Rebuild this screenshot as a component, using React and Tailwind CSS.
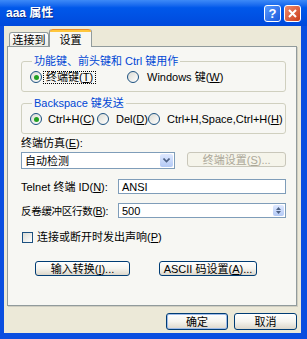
import React from "react";

const FONT = "font-['Liberation_Sans','Noto_Sans_CJK_SC',sans-serif]";

function Radio({ checked }) {
  return (
    <span className="flex h-[12px] w-[12px] shrink-0 items-center justify-center rounded-full border border-[#1c5180] bg-gradient-to-br from-[#dcdcd4] to-white">
      {checked && <span className="h-[5px] w-[5px] rounded-full bg-[#21a121]" />}
    </span>
  );
}

function XpButton({ children, className = "", primary }) {
  return (
    <div
      className={
        "flex h-[15px] items-center justify-center rounded-[3px] border border-[#003c74] bg-gradient-to-b from-white via-[#f5f4ef] to-[#dcd7cb] leading-[12px] text-black " +
        (primary ? "shadow-[inset_0_0_0_1px_#9fbbe8] " : "") +
        className
      }
    >
      {children}
    </div>
  );
}

function Group({ label, children, className = "" }) {
  return (
    <fieldset className={"h-[37px] rounded-[3px] border border-[#d0d0bf] p-0 " + className}>
      <legend className="ml-[10px] px-[2px] leading-[12px] text-[#0046d5]">{label}</legend>
      {children}
    </fieldset>
  );
}

export default function App() {
  return (
    <div className={"flex h-[339px] w-[307px] flex-col overflow-hidden bg-[#0a4ee0] text-[11px] " + FONT}>
      {/* title bar */}
      <div className="flex h-[26px] shrink-0 items-center bg-gradient-to-b from-[#3d8af7] via-[#0058ea] via-30% to-[#0049dc] pl-[6px] pr-[6px]">
        <span className="text-[12px] font-bold leading-[14px] text-white [text-shadow:1px_1px_#0a2a8a]">aaa 属性</span>
        <div className="ml-auto flex gap-[3px]">
          <div className="flex h-[17px] w-[17px] items-center justify-center rounded-[3px] border border-white bg-gradient-to-br from-[#5a9bff] to-[#1a56db] text-[13px] font-bold leading-none text-white">
            ?
          </div>
          <div className="flex h-[17px] w-[17px] items-center justify-center rounded-[3px] border border-white bg-gradient-to-br from-[#f08a6a] to-[#c93a14]">
            <svg width="9" height="9" viewBox="0 0 9 9">
              <path d="M1 1L8 8M8 1L1 8" stroke="white" strokeWidth="2" />
            </svg>
          </div>
        </div>
      </div>

      {/* frame */}
      <div className="flex-1 pb-[6px] pl-[4px] pr-[6px]">
        <div className="flex h-full flex-col bg-[#ece9d8] pl-[3px] pr-[4px] pt-[3px]">
          {/* tabs */}
          <div className="relative z-10 -mb-[1px] flex h-[18px] items-end pl-[2px]">
            <div className="mb-[1px] flex h-[14px] w-[40px] items-center justify-center rounded-t-[3px] border border-b-0 border-[#919b9c] bg-gradient-to-b from-white to-[#ecebe5] leading-[12px]">
              连接到
            </div>
            <div className="flex h-[18px] w-[43px] flex-col rounded-t-[3px] border-x border-[#919b9c] bg-[#f7f7f3]">
              <div className="h-[3px] rounded-t-[3px] border-t border-[#e68b2c] bg-[#ffc73c]" />
              <div className="flex flex-1 items-center justify-center leading-[12px]">设置</div>
            </div>
          </div>

          {/* panel */}
          <div className="h-[260px] border border-[#919b9c] bg-[#f7f7f3] pl-[13px] pr-[10px] pt-[8px] shadow-[1px_1px_0_#d0cec1]">
            <Group label="功能键、前头键和 Ctrl 键用作">
              <div className="mt-[4px] flex h-[12px] items-center pl-[8px]">
                <div className="flex w-[97px] items-center">
                  <Radio checked />
                  <span className="ml-[1px] border border-dotted border-black px-[2px] leading-[11px]">
                    终端键(<u>T</u>)
                  </span>
                </div>
                <div className="flex items-center">
                  <Radio />
                  <span className="ml-[8px] leading-[12px]">
                    Windows 键(<u>W</u>)
                  </span>
                </div>
              </div>
            </Group>

            <Group label="Backspace 键发送" className="mt-[5px]">
              <div className="mt-[4px] flex h-[12px] items-center pl-[8px]">
                <div className="flex w-[67px] items-center">
                  <Radio checked />
                  <span className="ml-[6px] leading-[12px]">
                    Ctrl+H(<u>C</u>)
                  </span>
                </div>
                <div className="flex w-[51px] items-center">
                  <Radio />
                  <span className="ml-[7px] leading-[12px]">
                    Del(<u>D</u>)
                  </span>
                </div>
                <div className="flex items-center">
                  <Radio />
                  <span className="ml-[7px] leading-[12px] whitespace-nowrap">
                    Ctrl+H,Space,Ctrl+H(<u>H</u>)
                  </span>
                </div>
              </div>
            </Group>

            <div className="mt-[3px] leading-[12px]">
              终端仿真(<u>E</u>):
            </div>
            <div className="mt-[3px] flex items-start">
              <div className="flex h-[17px] w-[155px] items-center border border-[#7f9db9] bg-white pl-[3px]">
                <span className="leading-[12px]">自动检测</span>
                <div className="ml-auto mr-[1px] flex h-[13px] w-[13px] items-center justify-center rounded-[2px] bg-gradient-to-b from-[#dfe9ff] to-[#b3c9f5]">
                  <svg width="7" height="5" viewBox="0 0 7 5">
                    <path d="M0.5 0.5L3.5 3.5L6.5 0.5" stroke="#4d6185" strokeWidth="1.6" fill="none" />
                  </svg>
                </div>
              </div>
              <div className="ml-[12px] flex h-[15px] w-[99px] items-center justify-center rounded-[3px] border border-[#c9c7ba] bg-[#f5f4ea] leading-[12px] text-[#aca899]">
                终端设置(<u>S</u>)...
              </div>
            </div>

            <div className="mt-[10px] flex items-center">
              <span className="w-[97px] shrink-0 whitespace-nowrap leading-[12px]">
                Telnet 终端 ID(<u>N</u>):
              </span>
              <div className="flex h-[15px] w-[168px] items-center border border-[#7f9db9] bg-white pl-[3px] leading-[12px]">
                ANSI
              </div>
            </div>

            <div className="mt-[9px] flex items-center">
              <span className="w-[97px] shrink-0 whitespace-nowrap text-[10.5px] leading-[12px] tracking-[-0.3px]">
                反卷缓冲区行数(<u>B</u>):
              </span>
              <div className="flex h-[15px] w-[168px] items-center border border-[#7f9db9] bg-white pl-[3px] leading-[12px]">
                500
                <div className="ml-auto mr-[1px] flex h-[11px] w-[11px] flex-col items-center justify-center gap-[1px] rounded-[2px] bg-gradient-to-b from-[#dfe9ff] to-[#b3c9f5]">
                  <svg width="5" height="3" viewBox="0 0 5 3">
                    <path d="M0 3L2.5 0L5 3Z" fill="#4d6185" />
                  </svg>
                  <svg width="5" height="3" viewBox="0 0 5 3">
                    <path d="M0 0L2.5 3L5 0Z" fill="#4d6185" />
                  </svg>
                </div>
              </div>
            </div>

            <div className="mt-[13px] flex h-[12px] items-center pl-[1px]">
              <span className="h-[11px] w-[11px] border border-[#1c5180] bg-gradient-to-br from-[#dcdcd4] to-white" />
              <span className="ml-[4px] leading-[12px]">
                连接或断开时发出声响(<u>P</u>)
              </span>
            </div>

            <div className="mt-[18px] flex">
              <XpButton className="ml-[14px] w-[95px]">
                输入转换(<u>I</u>)...
              </XpButton>
              <XpButton className="ml-[29px] w-[98px]">
                ASCII 码设置(<u>A</u>)...
              </XpButton>
            </div>
          </div>

          {/* footer */}
          <div className="mt-[7px] flex justify-end gap-[6px]">
            <XpButton primary className="h-[17px] w-[62px]">
              确定
            </XpButton>
            <XpButton className="h-[17px] w-[63px]">取消</XpButton>
          </div>
        </div>
      </div>
    </div>
  );
}
